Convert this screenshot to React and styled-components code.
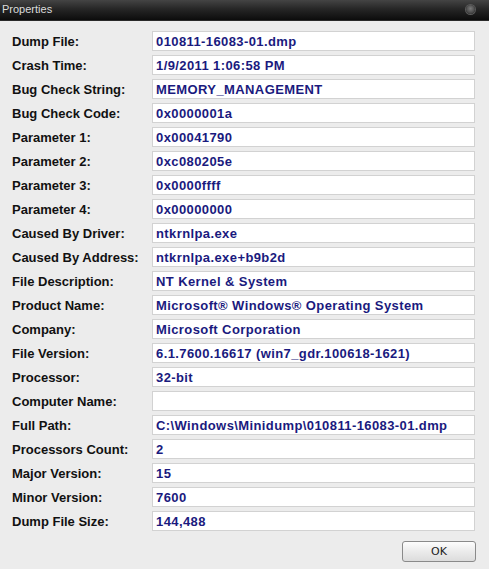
import React from "react";
import styled, { createGlobalStyle } from "styled-components";

const GlobalStyle = createGlobalStyle`
  html, body {
    margin: 0;
    padding: 0;
    background: #ececec;
  }
`;

const rows = [
  ["Dump File:", "010811-16083-01.dmp"],
  ["Crash Time:", "1/9/2011 1:06:58 PM"],
  ["Bug Check String:", "MEMORY_MANAGEMENT"],
  ["Bug Check Code:", "0x0000001a"],
  ["Parameter 1:", "0x00041790"],
  ["Parameter 2:", "0xc080205e"],
  ["Parameter 3:", "0x0000ffff"],
  ["Parameter 4:", "0x00000000"],
  ["Caused By Driver:", "ntkrnlpa.exe"],
  ["Caused By Address:", "ntkrnlpa.exe+b9b2d"],
  ["File Description:", "NT Kernel & System"],
  ["Product Name:", "Microsoft® Windows® Operating System"],
  ["Company:", "Microsoft Corporation"],
  ["File Version:", "6.1.7600.16617 (win7_gdr.100618-1621)"],
  ["Processor:", "32-bit"],
  ["Computer Name:", ""],
  ["Full Path:", "C:\\Windows\\Minidump\\010811-16083-01.dmp"],
  ["Processors Count:", "2"],
  ["Major Version:", "15"],
  ["Minor Version:", "7600"],
  ["Dump File Size:", "144,488"],
];

export default function App() {
  return (
    <Window>
      <GlobalStyle />
      <TitleBar>
        <Title>Properties</Title>
        <CloseDot />
      </TitleBar>
      <Content>
        <Fields>
          {rows.map(([label, value]) => (
            <Row key={label}>
              <Label>{label}</Label>
              <Value>{value}</Value>
            </Row>
          ))}
        </Fields>
        <Footer>
          <OkButton>OK</OkButton>
        </Footer>
      </Content>
    </Window>
  );
}

const Window = styled.div`
  width: 489px;
  height: 569px;
  background: #ececec;
  display: flex;
  flex-direction: column;
  overflow: hidden;
`;

const TitleBar = styled.div`
  height: 20px;
  display: flex;
  align-items: center;
  justify-content: space-between;
  padding: 0 14px 0 2px;
  background: linear-gradient(to bottom, #444 0%, #262626 45%, #0c0c0c 100%);
  border-bottom: 1px solid #2a2a2a;
`;

const Title = styled.span`
  font-family: "Liberation Sans", Arial, sans-serif;
  font-size: 11px;
  color: #dcdcdc;
  margin-top: -2px;
`;

const CloseDot = styled.span`
  width: 9px;
  height: 9px;
  border-radius: 50%;
  background: radial-gradient(circle at 50% 40%, #7a7a7a 0%, #4a4a4a 60%, #2e2e2e 100%);
  box-shadow: 0 0 0 1px #5a5a5a;
  margin-top: -1px;
`;

const Content = styled.div`
  padding: 10px 14px 0 12px;
  display: flex;
  flex-direction: column;
`;

const Fields = styled.div`
  display: flex;
  flex-direction: column;
  gap: 4px;
`;

const Row = styled.div`
  display: grid;
  grid-template-columns: 140px 1fr;
  align-items: center;
  height: 20px;
`;

const Label = styled.span`
  font-family: "Liberation Sans", Arial, sans-serif;
  font-weight: bold;
  font-size: 13px;
  color: #111;
`;

const Value = styled.div`
  box-sizing: border-box;
  height: 20px;
  background: #fff;
  border: 1px solid #d2d2d2;
  padding: 0 3px;
  display: flex;
  align-items: center;
  font-family: "Liberation Sans", Arial, sans-serif;
  font-weight: bold;
  font-size: 13px;
  letter-spacing: 0.4px;
  color: #1a1a7e;
  white-space: nowrap;
  overflow: hidden;
`;

const Footer = styled.div`
  display: flex;
  justify-content: flex-end;
  margin-top: 10px;
  margin-right: -1px;
`;

const OkButton = styled.button`
  width: 74px;
  height: 21px;
  border: 1px solid #8a8a8a;
  border-radius: 3px;
  background: linear-gradient(to bottom, #fdfdfd 0%, #ebebeb 50%, #dcdcdc 100%);
  font-family: "DejaVu Sans", Verdana, sans-serif;
  font-size: 11px;
  color: #222;
  padding: 0;
`;
